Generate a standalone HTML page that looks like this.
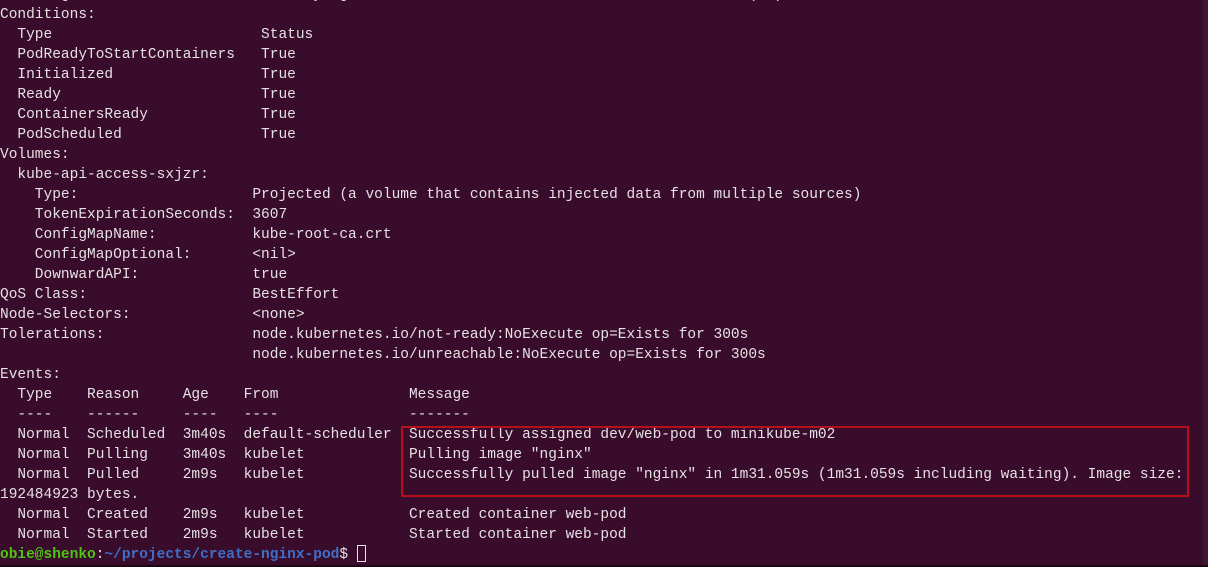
<!DOCTYPE html>
<html><head><style>
html,body{margin:0;padding:0;width:1208px;height:567px;overflow:hidden;background:#380c2a;}
pre{position:absolute;left:0;top:-15px;margin:0;font-family:"Liberation Mono",monospace;font-size:14.5px;line-height:20px;color:#e6e1e4;white-space:pre;}
.g{color:#4fc414;font-weight:bold}.b{color:#3f6fc8;font-weight:bold}
.box{position:absolute;left:401px;top:426px;width:784px;height:67px;border:2px solid #b5101c;}
.cur{display:inline-block;width:9px;height:17px;border:1px solid #e6e1e4;vertical-align:-4px;box-sizing:border-box;}
.sb{position:absolute;right:0;top:0;width:5px;height:565px;background:#40162f;}
.bot{position:absolute;left:0;bottom:0;width:1208px;height:2px;background:#1e0615;}
</style></head><body>
<pre>    Image ID:       docker.io/library/nginx@sha256:0000000000000000000000000000000000 (ID)
Conditions:
  Type                        Status
  PodReadyToStartContainers   True
  Initialized                 True
  Ready                       True
  ContainersReady             True
  PodScheduled                True
Volumes:
  kube-api-access-sxjzr:
    Type:                    Projected (a volume that contains injected data from multiple sources)
    TokenExpirationSeconds:  3607
    ConfigMapName:           kube-root-ca.crt
    ConfigMapOptional:       &lt;nil&gt;
    DownwardAPI:             true
QoS Class:                   BestEffort
Node-Selectors:              &lt;none&gt;
Tolerations:                 node.kubernetes.io/not-ready:NoExecute op=Exists for 300s
                             node.kubernetes.io/unreachable:NoExecute op=Exists for 300s
Events:
  Type    Reason     Age    From               Message
  ----    ------     ----   ----               -------
  Normal  Scheduled  3m40s  default-scheduler  Successfully assigned dev/web-pod to minikube-m02
  Normal  Pulling    3m40s  kubelet            Pulling image "nginx"
  Normal  Pulled     2m9s   kubelet            Successfully pulled image "nginx" in 1m31.059s (1m31.059s including waiting). Image size:
192484923 bytes.
  Normal  Created    2m9s   kubelet            Created container web-pod
  Normal  Started    2m9s   kubelet            Started container web-pod
<span class="g">obie@shenko</span>:<span class="b">~/projects/create-nginx-pod</span>$ <span class="cur"></span></pre>
<div class="box"></div>
<div class="sb"></div>
<div class="bot"></div>
</body></html>
